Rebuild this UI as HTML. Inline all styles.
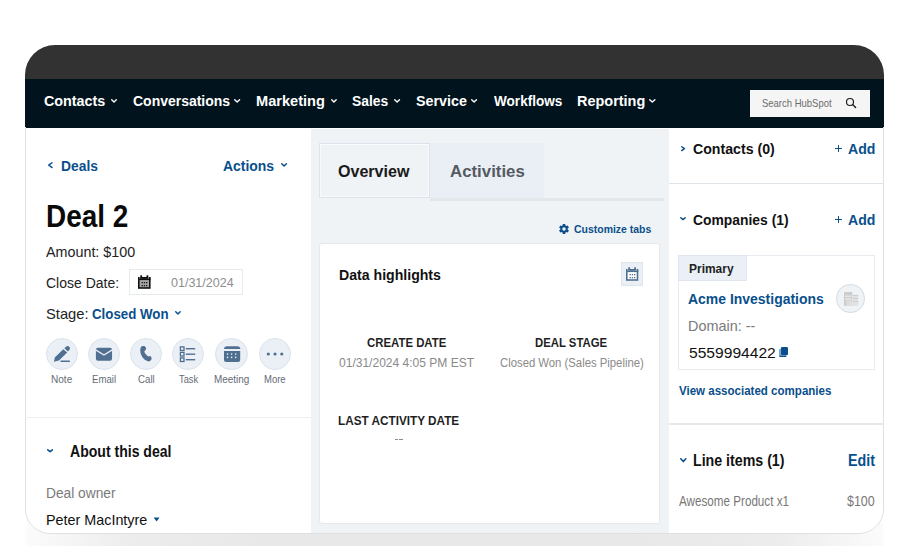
<!DOCTYPE html>
<html><head><meta charset="utf-8"><style>
*{margin:0;padding:0;box-sizing:border-box}
html,body{width:902px;height:546px;overflow:hidden;background:#fff;font-family:"Liberation Sans",sans-serif;position:relative}
.t{position:absolute;white-space:nowrap;line-height:1}
.r{position:absolute}
svg.r{overflow:visible}
#shadow{position:absolute;left:26px;top:512px;width:857px;height:34px;background:linear-gradient(90deg,#fbfbfb 0px,#ececec 110px,#e8e8e8 250px,#e8e8e8 600px,#ececec 750px,#fbfbfb 857px)}
#frame{position:absolute;left:25px;top:45px;width:859px;height:489px;border-radius:30px 30px 25px 25px;overflow:hidden;background:#fff}
#border{position:absolute;left:25px;top:45px;width:859px;height:489px;border-radius:30px 30px 25px 25px;border:1px solid #e0e0e0;pointer-events:none;clip-path:inset(82px 0 0 0)}
#topbar{position:absolute;left:0;top:0;width:859px;height:34px;background:#323232}
#nav{position:absolute;left:0;top:34px;width:859px;height:48.5px;background:#01131d}
#left{position:absolute;left:0;top:82px;width:286px;height:407px;background:#fff}
#mid{position:absolute;left:286px;top:84px;width:358px;height:405px;background:#f0f3f5}
#right{position:absolute;left:644px;top:82px;width:216px;height:407px;background:#fff}
</style></head><body>
<div id="shadow"></div>
<div id="frame"><div id="topbar"></div><div id="left"></div><div id="mid"></div><div id="right"></div><div id="nav"></div></div>
<div id="border"></div>
<div class="t" style="left:44.43px;top:93.15px;font-size:15.29px;color:#ffffff;font-weight:bold;transform:scaleX(0.9371);transform-origin:0 0;">Contacts</div>
<div class="t" style="left:132.69px;top:93.15px;font-size:15.29px;color:#ffffff;font-weight:bold;transform:scaleX(0.9145);transform-origin:0 0;">Conversations</div>
<div class="t" style="left:256.43px;top:93.15px;font-size:15.29px;color:#ffffff;font-weight:bold;transform:scaleX(0.9551);transform-origin:0 0;">Marketing</div>
<div class="t" style="left:352.48px;top:93.15px;font-size:15.29px;color:#ffffff;font-weight:bold;transform:scaleX(0.9086);transform-origin:0 0;">Sales</div>
<div class="t" style="left:415.77px;top:93.15px;font-size:15.29px;color:#ffffff;font-weight:bold;transform:scaleX(0.9367);transform-origin:0 0;">Service</div>
<div class="t" style="left:494.30px;top:93.15px;font-size:15.29px;color:#ffffff;font-weight:bold;transform:scaleX(0.8879);transform-origin:0 0;">Workflows</div>
<div class="t" style="left:577.09px;top:93.15px;font-size:15.29px;color:#ffffff;font-weight:bold;transform:scaleX(0.9465);transform-origin:0 0;">Reporting</div>
<svg class="r" style="left:111px;top:99.2px" width="6.00" height="3.70" viewBox="0 0 6.00 3.70"><polyline points="0.70,0.70 3.00,3.00 5.30,0.70" fill="none" stroke="#ffffff" stroke-width="1.4" stroke-linecap="round" stroke-linejoin="round"/></svg>
<svg class="r" style="left:234.4px;top:99.2px" width="6.30" height="3.70" viewBox="0 0 6.30 3.70"><polyline points="0.70,0.70 3.15,3.00 5.60,0.70" fill="none" stroke="#ffffff" stroke-width="1.4" stroke-linecap="round" stroke-linejoin="round"/></svg>
<svg class="r" style="left:330.7px;top:99.2px" width="5.90" height="3.70" viewBox="0 0 5.90 3.70"><polyline points="0.70,0.70 2.95,3.00 5.20,0.70" fill="none" stroke="#ffffff" stroke-width="1.4" stroke-linecap="round" stroke-linejoin="round"/></svg>
<svg class="r" style="left:393.7px;top:99.2px" width="6.20" height="3.70" viewBox="0 0 6.20 3.70"><polyline points="0.70,0.70 3.10,3.00 5.50,0.70" fill="none" stroke="#ffffff" stroke-width="1.4" stroke-linecap="round" stroke-linejoin="round"/></svg>
<svg class="r" style="left:471.2px;top:99.2px" width="6.20" height="3.70" viewBox="0 0 6.20 3.70"><polyline points="0.70,0.70 3.10,3.00 5.50,0.70" fill="none" stroke="#ffffff" stroke-width="1.4" stroke-linecap="round" stroke-linejoin="round"/></svg>
<svg class="r" style="left:649.3px;top:99.2px" width="6.60" height="3.70" viewBox="0 0 6.60 3.70"><polyline points="0.70,0.70 3.30,3.00 5.90,0.70" fill="none" stroke="#ffffff" stroke-width="1.4" stroke-linecap="round" stroke-linejoin="round"/></svg>
<div class="r" style="left:750px;top:90px;width:120px;height:26.5px;background:#f5f5f5;"></div>
<div class="t" style="left:761.63px;top:98.67px;font-size:10.20px;color:#6b6b6b;font-weight:normal;transform:scaleX(0.9309);transform-origin:0 0;">Search HubSpot</div>
<svg class="r" style="left:844px;top:96px" width="14" height="14" viewBox="0 0 14 14"><circle cx="6" cy="6" r="3.5" fill="none" stroke="#1a1a1a" stroke-width="1.15"/><line x1="8.6" y1="8.6" x2="11.6" y2="11.5" stroke="#1a1a1a" stroke-width="1.35" stroke-linecap="round"/></svg>
<svg class="r" style="left:48.2px;top:162px" width="4.70" height="6.20" viewBox="0 0 4.70 6.20"><polyline points="3.95,0.75 0.75,3.10 3.95,5.45" fill="none" stroke="#0a4f8c" stroke-width="1.5" stroke-linecap="round" stroke-linejoin="round"/></svg>
<div class="t" style="left:60.83px;top:158.15px;font-size:15.29px;color:#0a4f8c;font-weight:bold;transform:scaleX(0.9054);transform-origin:0 0;">Deals</div>
<div class="t" style="left:222.98px;top:158.25px;font-size:15.29px;color:#0a4f8c;font-weight:bold;transform:scaleX(0.9124);transform-origin:0 0;">Actions</div>
<svg class="r" style="left:280.6px;top:163.2px" width="6.20" height="3.80" viewBox="0 0 6.20 3.80"><polyline points="0.75,0.75 3.10,3.05 5.45,0.75" fill="none" stroke="#0a4f8c" stroke-width="1.5" stroke-linecap="round" stroke-linejoin="round"/></svg>
<div class="t" style="left:46.15px;top:202.26px;font-size:30.88px;color:#0a0a0a;font-weight:bold;transform:scaleX(0.9042);transform-origin:0 0;">Deal 2</div>
<div class="t" style="left:46.40px;top:244.26px;font-size:15.22px;color:#222;font-weight:normal;transform:scaleX(0.9414);transform-origin:0 0;">Amount: $100</div>
<div class="t" style="left:45.80px;top:275.33px;font-size:15.44px;color:#222;font-weight:normal;transform:scaleX(0.9064);transform-origin:0 0;">Close Date:</div>
<div class="r" style="left:129.3px;top:269.3px;width:113.5px;height:25.30000000000001px;background:#fff;border:1.6px solid #e5eaee;"></div>
<svg class="r" style="left:138.2px;top:275px;overflow:visible" width="12.6" height="13.8" viewBox="0 -2 12.6 13.8"><rect x="0.8" y="0.8" width="11.0" height="10.200000000000001" fill="#a8a8a8" stroke="#111" stroke-width="1.6"/><rect x="0" y="1.5" width="12.6" height="1.6" fill="#111"/><rect x="4.8" y="0" width="3.0" height="1.6" fill="#111"/><rect x="2.3" y="-1.7" width="1.8" height="2.9" fill="#111"/><rect x="8.5" y="-1.7" width="1.8" height="2.9" fill="#111"/><rect x="1.6" y="0" width="0.5" height="1.5" fill="#fff"/><rect x="10.5" y="0" width="0.5" height="1.5" fill="#fff"/><rect x="3.60" y="5.00" width="1.3" height="1.3" fill="#111"/><rect x="3.60" y="8.00" width="1.3" height="1.3" fill="#111"/><rect x="5.80" y="5.00" width="1.3" height="1.3" fill="#111"/><rect x="5.80" y="8.00" width="1.3" height="1.3" fill="#111"/><rect x="8.00" y="5.00" width="1.3" height="1.3" fill="#111"/><rect x="8.00" y="8.00" width="1.3" height="1.3" fill="#111"/></svg>
<div class="t" style="left:170.50px;top:277.21px;font-size:12.03px;color:#8e8e8e;font-weight:normal;transform:scaleX(1.0416);transform-origin:0 0;">01/31/2024</div>
<div class="t" style="left:45.92px;top:306.30px;font-size:15.00px;color:#222;font-weight:normal;transform:scaleX(0.9825);transform-origin:0 0;">Stage:</div>
<div class="t" style="left:92.17px;top:306.30px;font-size:15.00px;color:#0a4f8c;font-weight:bold;transform:scaleX(0.8855);transform-origin:0 0;">Closed Won</div>
<svg class="r" style="left:175px;top:311.1px" width="5.90" height="3.70" viewBox="0 0 5.90 3.70"><polyline points="0.75,0.75 2.95,2.95 5.15,0.75" fill="none" stroke="#0a4f8c" stroke-width="1.5" stroke-linecap="round" stroke-linejoin="round"/></svg>
<div class="r" style="left:45.8px;top:337.8px;width:32.4px;height:32.4px;border-radius:50%;background:#eaf0f6;border:1px solid #dbe3ec"></div>
<div class="t" style="left:51.10px;top:374.79px;font-size:10.05px;color:#646c76;font-weight:normal;transform:scaleX(0.9999);transform-origin:0 0;">Note</div>
<div class="r" style="left:87.8px;top:337.8px;width:32.4px;height:32.4px;border-radius:50%;background:#eaf0f6;border:1px solid #dbe3ec"></div>
<div class="t" style="left:91.83px;top:374.79px;font-size:10.05px;color:#646c76;font-weight:normal;transform:scaleX(0.9568);transform-origin:0 0;">Email</div>
<div class="r" style="left:129.8px;top:337.8px;width:32.4px;height:32.4px;border-radius:50%;background:#eaf0f6;border:1px solid #dbe3ec"></div>
<div class="t" style="left:138.02px;top:374.79px;font-size:10.05px;color:#646c76;font-weight:normal;transform:scaleX(0.9640);transform-origin:0 0;">Call</div>
<div class="r" style="left:171.8px;top:337.8px;width:32.4px;height:32.4px;border-radius:50%;background:#eaf0f6;border:1px solid #dbe3ec"></div>
<div class="t" style="left:178.81px;top:374.79px;font-size:10.05px;color:#646c76;font-weight:normal;transform:scaleX(0.9263);transform-origin:0 0;">Task</div>
<div class="r" style="left:215.4px;top:337.8px;width:32.4px;height:32.4px;border-radius:50%;background:#eaf0f6;border:1px solid #dbe3ec"></div>
<div class="t" style="left:213.80px;top:374.79px;font-size:10.05px;color:#646c76;font-weight:normal;transform:scaleX(0.9891);transform-origin:0 0;">Meeting</div>
<div class="r" style="left:258.8px;top:337.8px;width:32.4px;height:32.4px;border-radius:50%;background:#eaf0f6;border:1px solid #dbe3ec"></div>
<div class="t" style="left:263.94px;top:374.79px;font-size:10.05px;color:#646c76;font-weight:normal;transform:scaleX(0.9440);transform-origin:0 0;">More</div>
<svg class="r" style="left:46px;top:338px" width="32" height="32" viewBox="0 0 32 32"><path d="M7.9 23.8 L9.0 19.2 L17.3 11.2 L21.2 14.6 L12.9 22.6 Z" fill="#516f90"/><path d="M18.4 10.3 L20.2 8.6 Q21.8 7.4 23.3 8.7 Q24.6 10.1 23.5 11.7 L21.9 13.5 Z" fill="#516f90"/><rect x="14.3" y="22.6" width="9.75" height="1.5" rx="0.75" fill="#516f90"/></svg>
<svg class="r" style="left:88px;top:338px" width="32" height="32" viewBox="0 0 32 32"><rect x="7.9" y="9.7" width="16.15" height="13.1" rx="2" fill="#516f90"/><polyline points="7.6,11.9 15.95,17.0 24.3,11.9" fill="none" stroke="#eaf0f6" stroke-width="1.25"/></svg>
<svg class="r" style="left:130px;top:338px" width="32" height="32" viewBox="0 0 32 32"><path d="M11.6 8.3 Q13.0 7.6 14.4 8.1 Q15.9 8.8 16.1 10.6 Q16.2 12.0 14.8 12.8 Q14.0 13.3 14.6 14.6 Q15.8 16.8 17.6 18.1 Q18.6 18.7 19.2 18.2 Q20.3 17.6 21.2 18.9 Q22.0 20.4 21.3 21.8 Q20.2 23.6 18.4 23.5 Q15.0 23.0 12.6 19.6 Q10.2 16.2 10.2 12.2 Q10.3 9.3 11.6 8.3 Z" fill="#516f90"/></svg>
<svg class="r" style="left:172px;top:338px" width="32" height="32" viewBox="0 0 32 32"><rect x="8.4" y="8.9" width="3.6" height="3.6" fill="none" stroke="#516f90" stroke-width="1.3"/><rect x="13.8" y="10.0" width="9.4" height="1.4" fill="#516f90"/><rect x="8.4" y="14.4" width="3.6" height="3.6" fill="none" stroke="#516f90" stroke-width="1.3"/><rect x="13.8" y="15.5" width="9.4" height="1.4" fill="#516f90"/><rect x="8.4" y="19.9" width="3.6" height="3.6" fill="none" stroke="#516f90" stroke-width="1.3"/><rect x="13.8" y="21.0" width="9.4" height="1.4" fill="#516f90"/></svg>
<svg class="r" style="left:215.6px;top:338px" width="32" height="32" viewBox="0 0 32 32"><path d="M8.0 11.0 Q8.2 8.15 11 8.15 L21.4 8.15 Q24.2 8.15 24.3 11.0 Z" fill="#516f90"/><path d="M8.0 13.0 L24.2 13.0 L24.2 22.0 Q24.2 24.05 22.2 24.05 L10.0 24.05 Q8.0 24.05 8.0 22.0 Z" fill="#516f90"/><circle cx="11.5" cy="16.1" r="0.8" fill="#eaf0f6"/><circle cx="11.5" cy="19.400000000000002" r="0.8" fill="#eaf0f6"/><circle cx="15.6" cy="16.1" r="0.8" fill="#eaf0f6"/><circle cx="15.6" cy="19.400000000000002" r="0.8" fill="#eaf0f6"/><circle cx="19.7" cy="16.1" r="0.8" fill="#eaf0f6"/><circle cx="19.7" cy="19.400000000000002" r="0.8" fill="#eaf0f6"/></svg>
<svg class="r" style="left:259px;top:338px" width="32" height="32" viewBox="0 0 32 32"><circle cx="9.3" cy="16" r="1.6" fill="#516f90"/><circle cx="16.05" cy="16" r="1.6" fill="#516f90"/><circle cx="22.8" cy="16" r="1.6" fill="#516f90"/></svg>
<div class="r" style="left:25px;top:416.5px;width:286px;height:1.0px;background:#eeeeee;"></div>
<svg class="r" style="left:47.4px;top:449.3px" width="6.20" height="3.50" viewBox="0 0 6.20 3.50"><polyline points="0.80,0.80 3.10,2.70 5.40,0.80" fill="none" stroke="#0a4f8c" stroke-width="1.6" stroke-linecap="round" stroke-linejoin="round"/></svg>
<div class="t" style="left:70.28px;top:443.81px;font-size:15.59px;color:#111111;font-weight:bold;transform:scaleX(0.9020);transform-origin:0 0;">About this deal</div>
<div class="t" style="left:45.90px;top:486.42px;font-size:14.86px;color:#7a7a7a;font-weight:normal;transform:scaleX(0.9254);transform-origin:0 0;">Deal owner</div>
<div class="t" style="left:45.85px;top:512.08px;font-size:15.15px;color:#111111;font-weight:normal;transform:scaleX(0.9478);transform-origin:0 0;">Peter MacIntyre</div>
<svg class="r" style="left:152.5px;top:516.5px" width="7" height="5" viewBox="0 0 7 5"><path d="M0.6 0.5 L6.5 0.5 L3.6 4.5 Z" fill="#0a4f8c"/></svg>
<div class="r" style="left:319px;top:143px;width:111px;height:55px;background:#f0f3f5;border:1px solid #dce3ec;box-shadow:inset 1px 1px 0 #f8fafb,inset -1px -1px 0 #f8fafb"></div>
<div class="r" style="left:430px;top:143px;width:114px;height:55px;background:#eaeff6;"></div>
<div class="r" style="left:430px;top:198px;width:234px;height:2.5px;background:#e2e7ea;"></div>
<div class="t" style="left:338.26px;top:162.70px;font-size:17.13px;color:#1a1a1a;font-weight:bold;transform:scaleX(0.9385);transform-origin:0 0;">Overview</div>
<div class="t" style="left:449.70px;top:162.55px;font-size:17.19px;color:#555a60;font-weight:bold;transform:scaleX(0.9785);transform-origin:0 0;">Activities</div>
<svg class="r" style="left:559.1px;top:223.9px" width="10" height="10" viewBox="0 0 10 10"><g fill="#0a4f8c"><rect x="3.7" y="0" width="2.6" height="10" rx="0.3" transform="rotate(0 5 5)"/><rect x="3.7" y="0" width="2.6" height="10" rx="0.3" transform="rotate(60 5 5)"/><rect x="3.7" y="0" width="2.6" height="10" rx="0.3" transform="rotate(120 5 5)"/><circle cx="5" cy="5" r="3.7"/></g><circle cx="5" cy="5" r="1.75" fill="#f0f3f5"/></svg>
<div class="t" style="left:573.98px;top:223.59px;font-size:11.29px;color:#0a4f8c;font-weight:bold;transform:scaleX(0.9270);transform-origin:0 0;">Customize tabs</div>
<div class="r" style="left:319px;top:243px;width:341px;height:281px;background:#ffffff;border:1px solid #e6e9eb;border-radius:3px;"></div>
<div class="t" style="left:338.51px;top:268.45px;font-size:14.71px;color:#111111;font-weight:bold;transform:scaleX(0.9598);transform-origin:0 0;">Data highlights</div>
<div class="r" style="left:620.6px;top:262px;width:22.399999999999977px;height:24px;background:#eaf0f6;border:1px solid #dfe5ec;"></div>
<svg class="r" style="left:625.7px;top:267px;overflow:visible" width="12.3" height="13.8" viewBox="0 -2 12.3 13.8"><rect x="0.8" y="0.8" width="10.700000000000001" height="10.200000000000001" fill="#ffffff" stroke="#516f90" stroke-width="1.6"/><rect x="0" y="1.5" width="12.3" height="1.6" fill="#516f90"/><rect x="4.8" y="0" width="2.700000000000001" height="1.6" fill="#516f90"/><rect x="2.3" y="-1.7" width="1.8" height="2.9" fill="#516f90"/><rect x="8.200000000000001" y="-1.7" width="1.8" height="2.9" fill="#516f90"/><rect x="1.6" y="0" width="0.5" height="1.5" fill="#fff"/><rect x="10.200000000000001" y="0" width="0.5" height="1.5" fill="#fff"/><rect x="3.60" y="5.00" width="1.3" height="1.3" fill="#516f90"/><rect x="3.60" y="8.00" width="1.3" height="1.3" fill="#516f90"/><rect x="5.80" y="5.00" width="1.3" height="1.3" fill="#516f90"/><rect x="5.80" y="8.00" width="1.3" height="1.3" fill="#516f90"/><rect x="8.00" y="5.00" width="1.3" height="1.3" fill="#516f90"/><rect x="8.00" y="8.00" width="1.3" height="1.3" fill="#516f90"/></svg>
<div class="t" style="left:366.74px;top:337.45px;font-size:12.82px;color:#1f1f1f;font-weight:bold;transform:scaleX(0.8890);transform-origin:0 0;">CREATE DATE</div>
<div class="t" style="left:338.52px;top:357.27px;font-size:12.67px;color:#8a8a8a;font-weight:normal;transform:scaleX(0.9509);transform-origin:0 0;">01/31/2024 4:05 PM EST</div>
<div class="t" style="left:535.41px;top:337.45px;font-size:12.82px;color:#1f1f1f;font-weight:bold;transform:scaleX(0.8851);transform-origin:0 0;">DEAL STAGE</div>
<div class="t" style="left:499.93px;top:357.45px;font-size:12.82px;color:#8a8a8a;font-weight:normal;transform:scaleX(0.8829);transform-origin:0 0;">Closed Won (Sales Pipeline)</div>
<div class="t" style="left:337.78px;top:415.35px;font-size:12.82px;color:#1f1f1f;font-weight:bold;transform:scaleX(0.9169);transform-origin:0 0;">LAST ACTIVITY DATE</div>
<div class="r" style="left:394.8px;top:439px;width:3.599999999999966px;height:1.1999999999999886px;background:#8a8a8a;"></div>
<div class="r" style="left:399.4px;top:439px;width:3.6000000000000227px;height:1.1999999999999886px;background:#8a8a8a;"></div>
<svg class="r" style="left:680.9px;top:145.9px" width="4.20" height="5.30" viewBox="0 0 4.20 5.30"><polyline points="0.75,0.75 3.45,2.65 0.75,4.55" fill="none" stroke="#0a4f8c" stroke-width="1.5" stroke-linecap="round" stroke-linejoin="round"/></svg>
<div class="t" style="left:693.43px;top:141.74px;font-size:14.13px;color:#111111;font-weight:bold;transform:scaleX(1.0013);transform-origin:0 0;">Contacts (0)</div>
<div class="r" style="left:835px;top:147.9px;width:7px;height:1.1999999999999886px;background:#0a4f8c;"></div>
<div class="r" style="left:837.9px;top:145px;width:1.2000000000000455px;height:6.800000000000011px;background:#0a4f8c;"></div>
<div class="t" style="left:847.78px;top:142.22px;font-size:14.86px;color:#0a4f8c;font-weight:bold;transform:scaleX(0.9495);transform-origin:0 0;">Add</div>
<div class="r" style="left:669px;top:183px;width:215px;height:1px;background:#dfe4e9;"></div>
<svg class="r" style="left:680px;top:217.3px" width="6.00" height="3.30" viewBox="0 0 6.00 3.30"><polyline points="0.75,0.75 3.00,2.55 5.25,0.75" fill="none" stroke="#0a4f8c" stroke-width="1.5" stroke-linecap="round" stroke-linejoin="round"/></svg>
<div class="t" style="left:693.44px;top:213.42px;font-size:14.28px;color:#111111;font-weight:bold;transform:scaleX(0.9725);transform-origin:0 0;">Companies (1)</div>
<div class="r" style="left:835px;top:218.9px;width:7px;height:1.1999999999999886px;background:#0a4f8c;"></div>
<div class="r" style="left:837.9px;top:216px;width:1.2000000000000455px;height:6.800000000000011px;background:#0a4f8c;"></div>
<div class="t" style="left:847.78px;top:213.22px;font-size:14.86px;color:#0a4f8c;font-weight:bold;transform:scaleX(0.9495);transform-origin:0 0;">Add</div>
<div class="r" style="left:678px;top:255px;width:196.5px;height:114.5px;background:#fff;border:1px solid #e8ecf0;"></div>
<div class="r" style="left:678px;top:255px;width:68.60000000000002px;height:25.600000000000023px;background:#eaf0f6;border:1px solid #dfe5ec;"></div>
<div class="t" style="left:689.46px;top:262.67px;font-size:12.67px;color:#222;font-weight:bold;transform:scaleX(0.9447);transform-origin:0 0;">Primary</div>
<div class="t" style="left:688.18px;top:291.28px;font-size:15.15px;color:#0a4f8c;font-weight:bold;transform:scaleX(0.9221);transform-origin:0 0;">Acme Investigations</div>
<div class="r" style="left:836.3px;top:284.3px;width:28.4px;height:28.4px;border-radius:50%;background:#eff3f6;border:1px solid #d3dbe3"></div>
<svg class="r" style="left:843.5px;top:291.8px" width="14.2" height="14" viewBox="0 0 14.2 14"><rect x="0" y="0" width="8.3" height="13.9" fill="#cdcdcd"/><rect x="1" y="3.6" width="6.3" height="1.2" fill="#eeeeee"/><rect x="1" y="6.4" width="6.3" height="1.2" fill="#eeeeee"/><rect x="2.3" y="8.6" width="6" height="5.3" fill="#dedede"/><rect x="8.7" y="2.8" width="5.5" height="11.1" fill="#e2e2e2"/><rect x="8.7" y="3.2" width="5.5" height="0.8" fill="#c9c9c9"/><rect x="8.7" y="6.2" width="5.5" height="0.8" fill="#c9c9c9"/><rect x="8.7" y="9.2" width="5.5" height="0.8" fill="#c9c9c9"/></svg>
<div class="t" style="left:688.35px;top:318.67px;font-size:14.57px;color:#7a7a7a;font-weight:normal;transform:scaleX(0.9904);transform-origin:0 0;">Domain: --</div>
<div class="t" style="left:688.88px;top:346.15px;font-size:14.71px;color:#111111;font-weight:normal;transform:scaleX(1.0612);transform-origin:0 0;">5559994422</div>
<svg class="r" style="left:778px;top:346px" width="11" height="12" viewBox="0 0 11 12"><rect x="1" y="3" width="1.8" height="7.8" rx="0.6" fill="#7aa2c6"/><rect x="1.6" y="9.6" width="6.8" height="1.5" rx="0.7" fill="#0a4f8c"/><rect x="2.9" y="0.9" width="7.1" height="8.4" rx="1.4" fill="#0a4f8c"/></svg>
<div class="t" style="left:678.88px;top:384.82px;font-size:12.38px;color:#0a4f8c;font-weight:bold;transform:scaleX(0.9322);transform-origin:0 0;">View associated companies</div>
<div class="r" style="left:669px;top:423px;width:215px;height:2px;background:#e5e9ec;"></div>
<svg class="r" style="left:679.9px;top:457.6px" width="6.60" height="4.40" viewBox="0 0 6.60 4.40"><polyline points="0.80,0.80 3.30,3.60 5.80,0.80" fill="none" stroke="#0a4f8c" stroke-width="1.6" stroke-linecap="round" stroke-linejoin="round"/></svg>
<div class="t" style="left:692.81px;top:451.84px;font-size:16.02px;color:#111111;font-weight:bold;transform:scaleX(0.8863);transform-origin:0 0;">Line items (1)</div>
<div class="t" style="left:847.65px;top:452.78px;font-size:15.73px;color:#0a4f8c;font-weight:bold;transform:scaleX(0.9113);transform-origin:0 0;">Edit</div>
<div class="t" style="left:678.70px;top:494.70px;font-size:13.94px;color:#777;font-weight:normal;transform:scaleX(0.8368);transform-origin:0 0;">Awesome Product x1</div>
<div class="t" style="left:846.68px;top:494.70px;font-size:13.94px;color:#777;font-weight:normal;transform:scaleX(0.8927);transform-origin:0 0;">$100</div>
</body></html>
